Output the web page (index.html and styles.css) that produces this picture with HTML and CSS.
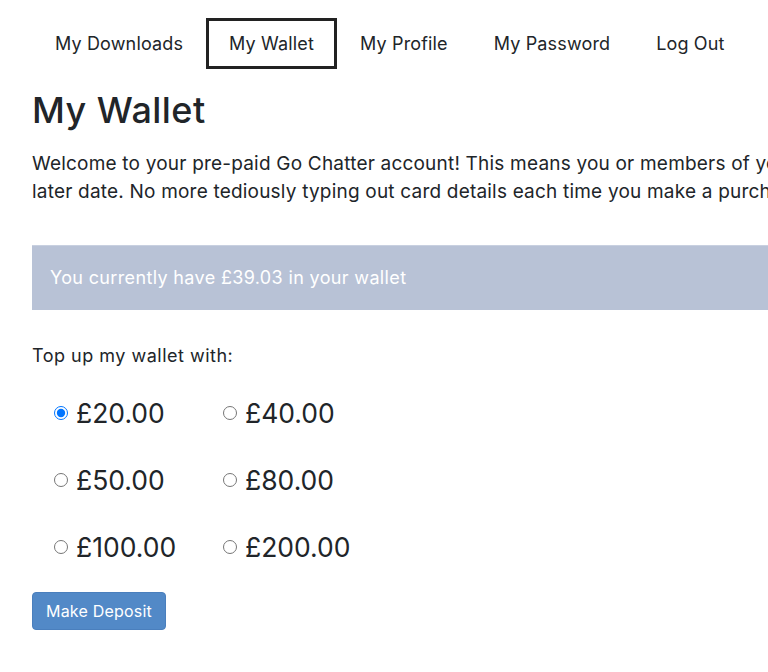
FILE: index.html
```html
<!DOCTYPE html>
<html lang="en">
<head>
<meta charset="utf-8">
<title>My Wallet</title>
<link rel="stylesheet" href="styles.css">
</head>
<body>
<div class="page">
  <nav class="tabs">
    <a class="tab" href="#">My Downloads</a>
    <a class="tab active" href="#">My Wallet</a>
    <a class="tab" href="#">My Profile</a>
    <a class="tab" href="#">My Password</a>
    <a class="tab" href="#">Log Out</a>
  </nav>
  <h1 class="title">My Wallet</h1>
  <p class="intro">Welcome to your pre-paid Go Chatter account! This means you or members of your family can add funds now and use them at a later date. No more tediously typing out card details each time you make a purchase on our website.</p>
  <div class="balance">You currently have £39.03 in your wallet</div>
  <form class="topup">
    <p class="topup-label">Top up my wallet with:</p>
    <div class="amounts">
      <label class="amount"><input type="radio" name="amt" checked> £20.00</label>
      <label class="amount"><input type="radio" name="amt"> £40.00</label>
      <label class="amount"><input type="radio" name="amt"> £50.00</label>
      <label class="amount"><input type="radio" name="amt"> £80.00</label>
      <label class="amount"><input type="radio" name="amt"> £100.00</label>
      <label class="amount"><input type="radio" name="amt"> £200.00</label>
    </div>
    <button type="button" class="deposit">Make Deposit</button>
  </form>
</div>
</body>
</html>
```
FILE: styles.css
```css
html, body {
  margin: 0;
  padding: 0;
  overflow: hidden;
  background: #fff;
}
body {
  font-family: "Inter", "Open Sans", sans-serif;
  color: #212529;
  width: 768px;
  height: 672px;
}
.page {
  width: 1180px;
  padding: 18px 32px 0;
}
.tabs {
  display: flex;
}
.tab {
  display: block;
  padding: 9px 20px;
  border: 3px solid transparent;
  color: #212529;
  text-decoration: none;
  font-size: 18px;
  letter-spacing: 0.15px;
  line-height: 27px;
}
.tab.active {
  border-color: #222;
}
.title {
  margin: 19px 0 0;
  font-size: 36px;
  font-weight: 500;
  letter-spacing: 0.45px;
  line-height: 44px;
}
.intro {
  margin: 18px 0 0;
  font-size: 19px;
  letter-spacing: 0.2px;
  line-height: 28px;
}
.balance {
  margin-top: 39px;
  background: #b8c2d6;
  border-top: 1px solid #c8d0e0;
  color: #fff;
  font-size: 18px;
  letter-spacing: 0.35px;
  line-height: 28px;
  padding: 18px 18px 18px;
}
.topup-label {
  margin: 32px 0 0;
  font-size: 18px;
  letter-spacing: 0.5px;
  line-height: 28px;
}
.amounts {
  display: grid;
  grid-template-columns: 169px 169px;
  row-gap: 27px;
  margin: 23px 0 0 22px;
}
.amount {
  display: flex;
  align-items: center;
  gap: 8px;
  font-size: 26.5px;
  line-height: 40px;
}
.amount input {
  margin: 0;
  width: 14px;
  height: 14px;
}
.deposit {
  margin-top: 25px;
  background: #5289c7;
  border: 1px solid #4a7fbd;
  border-radius: 4px;
  color: #fff;
  font-family: inherit;
  font-size: 16px;
  letter-spacing: 0.2px;
  line-height: 24px;
  padding: 6px 13px;
}
```
